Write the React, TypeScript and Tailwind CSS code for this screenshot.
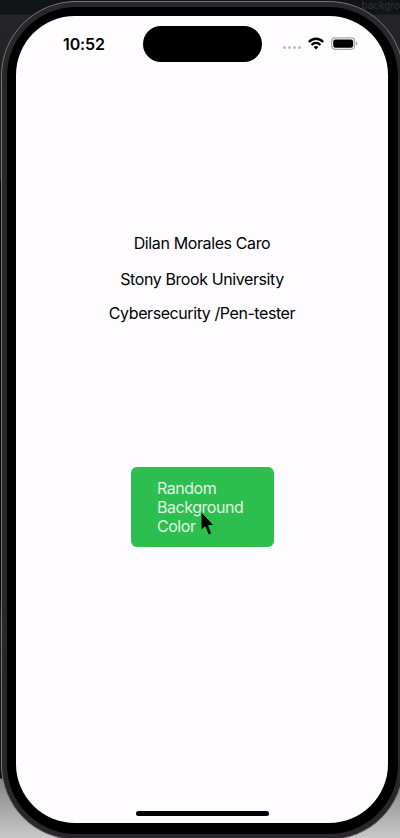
import React from "react";

function StatusBar() {
  return (
    <div className="flex h-[57px] items-start pt-[10px]">
      <div className="ml-[47px] mt-[8px] w-[80px] text-[16px] font-semibold leading-5 tracking-[-0.1px]">
        <span className="whitespace-nowrap">10:52</span>
      </div>
      <div className="h-[36px] w-[119px] rounded-full bg-black" />
      <div className="ml-[21px] mt-[11px] flex h-[13px] items-start">
        <div className="mt-[9px] flex gap-[2px]">
          {[0, 1, 2, 3].map((i) => (
            <span key={i} className="h-[3px] w-[3px] rounded-full bg-[#bdbabd]" />
          ))}
        </div>
        <svg className="ml-[7px]" width="16" height="13" viewBox="0 0 16 13" fill="none" stroke="#000" strokeWidth="2.4">
          <path d="M.9 5C4.900 .7 11.100 .7 15.100 5" />
          <path d="M3.600 8C6.200 5.200 9.800 5.200 12.400 8" />
          <path d="M5.600 10.100C7 8.700 9 8.700 10.400 10.100L8 12.500Z" fill="#000" stroke="none" />
        </svg>
        <svg className="ml-[7px]" width="28" height="13" viewBox="0 0 28 13">
          <rect x=".7" y=".9" width="23" height="11.400" rx="3.500" fill="#fff" stroke="#aaa7aa" strokeWidth="1.200" />
          <rect x="2.200" y="2.400" width="20" height="8.400" rx="2.200" fill="#000" />
          <path d="M25 4.700C27 5.300 27 7.900 25 8.500Z" fill="#aaa7aa" />
        </svg>
      </div>
    </div>
  );
}

export default function App() {
  return (
    <div className="relative h-[838px] w-[400px] overflow-hidden bg-[linear-gradient(to_bottom,#101416_0px,#101416_14px,#252426_15px,#202022_180px,#080808_182px,#080808_600px,#1c1c1d_615px,#111_778px,#858585_779px,#c8c8c8_838px)] font-[Inter,sans-serif] text-black">
      <span className="absolute right-0 top-0 text-[10px] leading-[10px] text-[#303336]">backgro</span>
      <div className="relative ml-px mt-px h-[839px] w-[403px] rounded-[75px] border border-[#77767a] bg-[#29272b] p-[5px]">
        <div className="h-full w-full rounded-[69px] bg-black p-[9px]">
          <div className="flex h-[807px] w-[372px] flex-col overflow-hidden rounded-[59px] bg-[#fefcff]">
            <StatusBar />
            <div className="mt-[160px] flex flex-col items-center text-[16px] leading-5">
              <p className="tracking-[-0.38px]">Dilan Morales Caro</p>
              <p className="mt-[16px] tracking-[-0.4px]">Stony Brook University</p>
              <p className="mt-[14px] tracking-[-0.42px]">Cybersecurity /Pen-tester</p>
            </div>
            <button className="ml-[115px] mt-[144px] h-[80px] w-[143px] rounded-[6px] bg-[#2dbe50] pl-[26px] text-left text-[16px] leading-[19px] text-[#e0f5e5]">
              <span className="block w-[90px] tracking-[-0.46px]">Random Background Color</span>
            </button>
            <div className="mb-[7px] ml-[120px] mt-auto h-[5px] w-[133px] rounded-full bg-black" />
          </div>
        </div>
      </div>
      <svg className="absolute left-[199px] top-[509px]" width="18" height="28" viewBox="0 0 18 28">
        <path d="M2 2.500V21.500L6 17.800L9.300 26L12.800 24.500L9.600 16.700H15.200Z" fill="#000" stroke="#16d936" strokeWidth="1" />
      </svg>
    </div>
  );
}
